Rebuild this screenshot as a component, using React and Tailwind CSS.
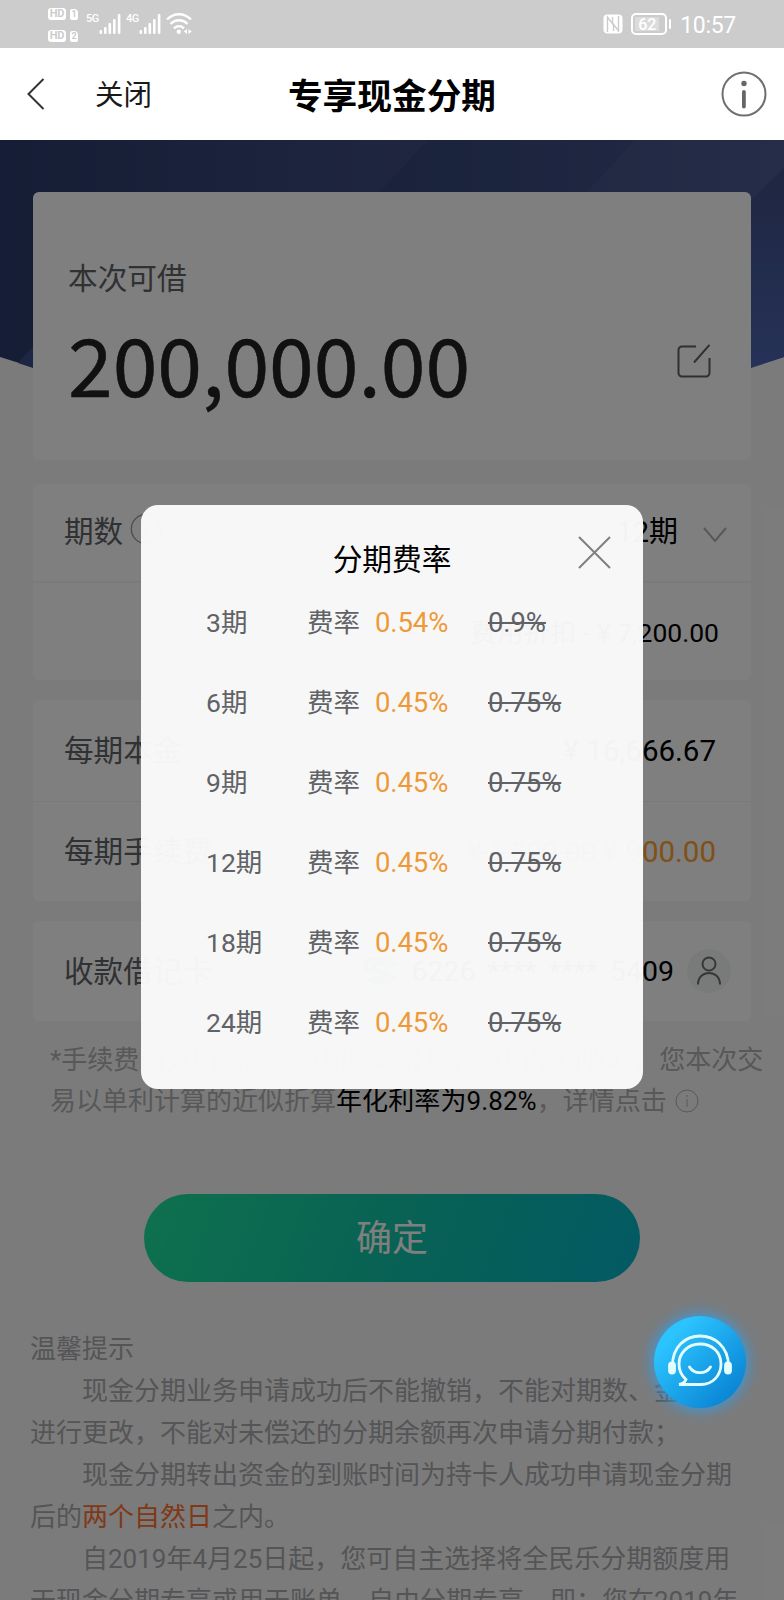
import React from "react";

const rates = [
  { term: "3期", rate: "0.54%", origin: "0.9%" },
  { term: "6期", rate: "0.45%", origin: "0.75%" },
  { term: "9期", rate: "0.45%", origin: "0.75%" },
  { term: "12期", rate: "0.45%", origin: "0.75%" },
  { term: "18期", rate: "0.45%", origin: "0.75%" },
  { term: "24期", rate: "0.45%", origin: "0.75%" },
];

const Signal = ({ label }) => (
  <div className="flex items-start">
    <span className="w-[13px] text-[11px] leading-[11px] font-medium tracking-tighter">{label}</span>
    <svg width="22" height="22" viewBox="0 0 22 22" fill="currentColor">
      <rect x="0.5" y="17" width="2.6" height="4" rx="1" />
      <rect x="5" y="14" width="2.6" height="7" rx="1" />
      <rect x="9.5" y="10" width="2.6" height="11" rx="1" />
      <rect x="14" y="6" width="2.6" height="15" rx="1" />
      <rect x="18.8" y="1" width="2.6" height="20" rx="1" />
    </svg>
  </div>
);

const HdBadge = ({ sim }) => (
  <div className="flex items-center gap-1 text-[#cccccc] font-bold">
    <span className="w-[18px] h-3 rounded-[3px] bg-white text-[11px] leading-3 text-center tracking-tight">
      HD
    </span>
    <span className="w-2 h-[11px] rounded-[2px] rounded-tr-[4px] bg-white text-[9px] leading-[11px] text-center">
      {sim}
    </span>
  </div>
);

const StatusBar = () => (
  <div className="h-12 bg-[#cccccc] text-white flex justify-between pl-12 pr-[48px]">
    <div className="flex">
      <div className="flex flex-col gap-2.5 pt-2">
        <HdBadge sim="1" />
        <HdBadge sim="2" />
      </div>
      <div className="flex gap-[5px] pt-[13px] pl-2">
        <Signal label="5G" />
        <Signal label="4G" />
        <svg width="26" height="22" viewBox="0 0 26 22" fill="none" stroke="currentColor" strokeWidth="2.4">
          <path d="M1 6.5C8 -0.5 18 -0.5 25 6.5" />
          <path d="M4.5 11C9.5 6 16.5 6 21.5 11" />
          <path d="M8 15.3C11 12.5 15 12.5 18 15.3" />
          <circle cx="12.8" cy="18.8" r="2.2" fill="currentColor" stroke="none" />
          <path d="M21 16v5l-3.2-2.5zM22.5 16v5l3.2-2.5z" fill="currentColor" stroke="none" />
        </svg>
      </div>
    </div>
    <div className="flex items-center">
      <svg width="20" height="20" viewBox="0 0 20 20">
        <rect x="0.5" y="0.5" width="19" height="19" rx="4" fill="#fff" />
        <path d="M4.5 18V3l6 8v6M15.5 2v15l-6-8V3" fill="none" stroke="#ccc" strokeWidth="1.4" />
      </svg>
      <div className="ml-2 w-9 h-[22px] rounded-[5px] border-2 border-white p-0.5">
        <div className="w-[24px] h-full bg-white/30 text-[16px] leading-[15px] font-medium text-center">
          62
        </div>
      </div>
      <div className="ml-0.5 w-[2px] h-2.5 rounded bg-white" />
      <span className="ml-[9px] pt-1 text-[23px] tracking-[-0.3px]">10:57</span>
    </div>
  </div>
);

const NavBar = () => (
  <div className="h-[92px] bg-white flex items-center justify-between pl-[27px] pr-[17px]">
    <div className="w-[201px] flex items-center">
      <svg width="18" height="32" viewBox="0 0 18 32" fill="none" stroke="#333" strokeWidth="2">
        <path d="M16.5 1L1.5 16l15 15" />
      </svg>
      <span className="ml-[50px] pt-1 text-[28.5px] text-[#1a1a1a]">关闭</span>
    </div>
    <h1 className="pt-[7px] text-[34.7px] font-bold text-black">专享现金分期</h1>
    <div className="w-[211px] flex justify-end">
      <svg width="46" height="46" viewBox="0 0 46 46">
        <circle cx="23" cy="23" r="21.5" fill="none" stroke="#707070" strokeWidth="2" />
        <circle cx="23" cy="12.5" r="2.7" fill="#666" />
        <rect x="21" y="19" width="3.8" height="18.5" rx="1.9" fill="#666" />
      </svg>
    </div>
  </div>
);

const InfoIcon = ({ className }) => (
  <svg className={className} viewBox="0 0 24 24" fill="none" stroke="currentColor">
    <circle cx="12" cy="12" r="11" />
    <path d="M12 10v8M12 6v2" />
  </svg>
);

const HeroBackground = () => (
  <svg className="absolute inset-x-0 top-0" width="784" height="300" viewBox="0 0 784 300">
    <defs>
      <linearGradient id="hero" x1="0" y1="0" x2="1" y2="0">
        <stop offset="0" stopColor="#2b3c6c" />
        <stop offset="0.5" stopColor="#3e4b7e" />
        <stop offset="1" stopColor="#4c5a90" />
      </linearGradient>
      <linearGradient id="band" x1="0" y1="0" x2="1" y2="0">
        <stop offset="0" stopColor="#344676" />
        <stop offset="1" stopColor="#3e4e84" />
      </linearGradient>
      <linearGradient id="side" x1="0" y1="0" x2="0" y2="1">
        <stop offset="0" stopColor="#3e4c82" />
        <stop offset="1" stopColor="#4c64b0" />
      </linearGradient>
    </defs>
    <path d="M0 0H784V217Q392 345 0 217Z" fill="url(#hero)" />
    <path d="M428 0H635L580 60H372Z" fill="url(#band)" />
    <path d="M784 28V217L751 228V60Z" fill="url(#side)" />
    <path d="M33 206V228L18 223Z" fill="#3a4c88" />
  </svg>
);

const AmountCard = () => (
  <div className="h-[268px] rounded-md bg-white pl-[35px] pr-[40px] pt-[65px]">
    <div className="text-[29.7px] leading-[44px] text-[#606266]">本次可借</div>
    <div className="flex items-center justify-between">
      <span className="font-['Noto_Sans_CJK_SC',sans-serif] text-[80.5px] leading-[120px] mt-[1px] text-[#222222] [-webkit-text-stroke:0.5px_#222222]">
        200,000.00
      </span>
      <svg
        className="mb-0.5"
        width="34"
        height="34"
        viewBox="0 0 34 34"
        fill="none"
        stroke="#606060"
        strokeWidth="2"
      >
        <path d="M19 2.5H5a3.5 3.5 0 0 0-3.5 3.5V29a3.5 3.5 0 0 0 3.5 3.5H29a3.5 3.5 0 0 0 3.5-3.5V14M17 18.5L32.5 0.8" />
      </svg>
    </div>
  </div>
);

const Row = ({ label, className, children }) => (
  <div className={`flex items-center justify-between pl-[31px] ${className}`}>
    <div className="flex items-center pt-0.5 text-[29.6px] text-[#606266]">{label}</div>
    <div className="flex items-center pt-0.5 text-black">{children}</div>
  </div>
);

const BankLogo = () => (
  <svg width="40" height="30" viewBox="0 0 40 30" fill="none" stroke="#3aa0a0" strokeWidth="4">
    <path d="M36 8C28 1 6 0 4 8s24 7 28 12-16 8-26 2" />
    <path d="M30 10C24 6 14 6 13 9s12 5 13 9-8 4-14 2" />
  </svg>
);

const LoanDetails = () => (
  <>
    <div className="mt-6 rounded-md bg-white">
      <Row
        className="h-[99px] pr-[24px] pb-0.5 border-b-2 border-[#f4f4f4]"
        label={
          <>
            期数
            <InfoIcon className="w-8 h-8 ml-[7px] -mt-1.5 text-[#999999]" />
          </>
        }
      >
        <span className="text-[29px]">12期</span>
        <svg className="ml-[25px] mt-1" width="24" height="16" viewBox="0 0 24 16" fill="none" stroke="#b0b0b0" strokeWidth="2">
          <path d="M1 1l11 13L23 1" />
        </svg>
      </Row>
      <Row className="h-[97px] pr-[32px]">
        <span className="text-[26.5px]">费用折扣 - ¥ 7,200.00</span>
      </Row>
    </div>

    <div className="mt-5 rounded-md bg-white">
      <Row label="每期本金" className="h-[102px] pr-[35px] border-b border-[#f2f2f2]">
        <span className="text-[29.5px]">¥ 16,666.67</span>
      </Row>
      <Row label="每期手续费" className="h-[99px] pr-[35px]">
        <span className="text-[28px] line-through text-[#999999]">¥ 1,500.00</span>
        <span className="ml-1.5 text-[29.5px] text-[#ffa030]">¥ 900.00</span>
      </Row>
    </div>

    <div className="mt-5 rounded-md bg-white">
      <Row label="收款借记卡" className="h-[100px] pr-5">
        <BankLogo />
        <span className="ml-2.5 text-[28.5px] whitespace-pre [word-spacing:5px]">6226 **** **** 5409</span>
        <div className="ml-[13px] -mt-0.5 w-11 h-11 rounded-full bg-[#f2f7f7] flex items-center justify-center">
          <svg width="26" height="30" viewBox="0 0 26 30" fill="none" stroke="#6e6e6e" strokeWidth="2">
            <circle cx="13" cy="8" r="6.5" />
            <path d="M2 28.5C2 13 24 13 24 28.5" />
          </svg>
        </div>
      </Row>
    </div>
  </>
);

const FeeNote = () => (
  <div className="pl-[50px] mt-[19px] text-[26px] leading-[41px] text-[#b0b0b0] whitespace-nowrap">
    <div>*手续费由分期金额乘每期费率计算，按期平均收取，您本次交</div>
    <div className="flex items-center">
      <span>
        易以单利计算的近似折算<span className="text-black tracking-[0.1px]">年化利率为9.82%</span>，详情点击
      </span>
      <InfoIcon className="w-6 h-6 ml-2 -mt-0.5" />
    </div>
  </div>
);

const Tips = () => (
  <div className="mt-[46px] pl-[30px] text-[26px] leading-[42px] text-[#aaaaae] whitespace-nowrap">
    <div>温馨提示</div>
    <div className="pl-[52px]">现金分期业务申请成功后不能撤销，不能对期数、金额</div>
    <div>进行更改，不能对未偿还的分期余额再次申请分期付款；</div>
    <div className="pl-[52px]">现金分期转出资金的到账时间为持卡人成功申请现金分期</div>
    <div>
      后的<span className="text-[#ff7030]">两个自然日</span>之内。
    </div>
    <div className="pl-[52px]">自2019年4月25日起，您可自主选择将全民乐分期额度用</div>
    <div>于现金分期专享或用于账单、自由分期专享，即：您在2019年</div>
  </div>
);

const RateModal = () => (
  <div className="absolute left-[141px] top-[365px] w-[502px] h-[584px] rounded-[17px] bg-[#fbfbfb]/97">
    <div className="pt-[32px] text-center text-[29.7px] leading-[46px] text-black">分期费率</div>
    <svg
      className="absolute right-[32px] top-[31px]"
      width="33"
      height="33"
      viewBox="0 0 33 33"
      stroke="#808080"
      strokeWidth="2"
    >
      <path d="M1 1l31 31M32 1L1 32" />
    </svg>
    {rates.map((item) => (
      <div
        key={item.term}
        className="h-20 pl-[65px] grid grid-cols-[101px_68px_113px_1fr] items-center text-[26.5px] text-[#606266]"
      >
        <span>{item.term}</span>
        <span>费率</span>
        <span className="text-[27.5px] tracking-[-0.1px] text-[#ee9a38]">{item.rate}</span>
        <span className="text-[27.5px] tracking-[-0.1px]">
          <span className="line-through decoration-2">{item.origin}</span>
        </span>
      </div>
    ))}
  </div>
);

const ServiceButton = () => (
  <button className="absolute left-[654px] top-[1176px] w-[92px] h-[92px] rounded-full bg-linear-to-br from-[#2cc4ff] from-20% to-[#0478cc] shadow-[0_0_14px_2px_#3a9be0]">
    <svg width="92" height="92" viewBox="0 0 92 92" fill="none" stroke="#e4feff" strokeWidth="2.8" strokeLinecap="round">
      <path d="M18.5 50C18 10 74 10 74.5 50" />
      <rect x="15.5" y="47" width="5" height="10" rx="2.5" fill="#e4feff" />
      <rect x="71.5" y="47" width="5" height="10" rx="2.5" fill="#e4feff" />
      <path d="M25 68.5H47C59 68.5 67 59 67 48C67 36 58 28 46 28S25 37 25 48C25 55 28 60 32 63.5C31 66 28 68 25 68.5Z" />
      <path d="M35.5 51C40 58.5 52 58.5 56.5 51" />
    </svg>
  </button>
);

const App = () => {
  return (
    <div className="w-[784px] h-[1600px] overflow-hidden font-[Roboto,'Noto_Sans_CJK_SC',sans-serif]">
      <StatusBar />
      <NavBar />
      <div className="relative h-[1460px] overflow-hidden bg-[#f7f7f7]">
        <HeroBackground />
        <div className="relative px-[33px] pt-[52px]">
          <AmountCard />
          <LoanDetails />
        </div>
        <FeeNote />
        <button className="block mx-auto mt-[72px] w-[496px] h-[88px] rounded-full bg-[linear-gradient(110deg,#1ce29c_0%,#12c4a8_50%,#06b4c8_100%)] text-[36px] text-white">
          <span className="block pt-0.5">确定</span>
        </button>
        <Tips />

        <div className="absolute inset-0 bg-black/50" />
        <RateModal />
        <ServiceButton />
      </div>
    </div>
  );
};

export default App;
